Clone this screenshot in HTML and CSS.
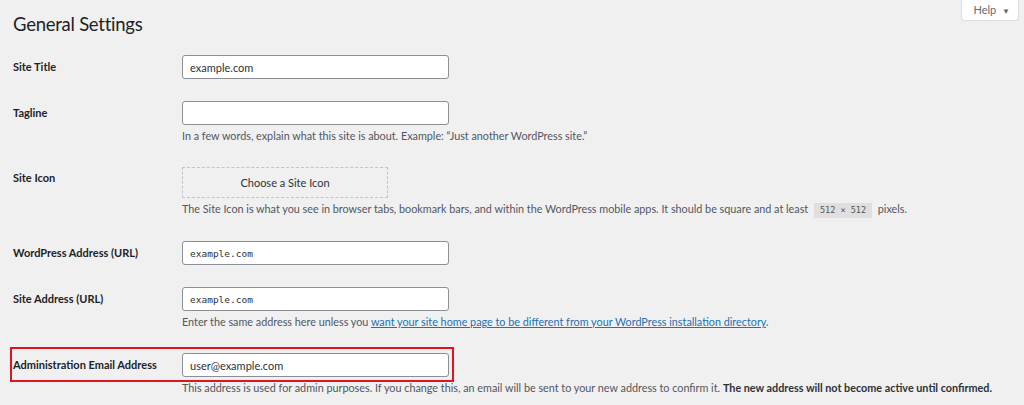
FILE: index.html
```html
<!DOCTYPE html>
<html lang="en">
<head>
  <meta charset="UTF-8" />
  <meta name="viewport" content="width=device-width, initial-scale=1.0"/>
  <title>General Settings</title>
  <link rel="stylesheet" href="styles.css">
</head>
<body>
  <div class="top-bar">
    <h1>General Settings</h1>
    <button class="help-btn">Help <span class="caret">&#9660;</span></button>
  </div>

  <div class="form">
    <div class="row row-first">
      <label class="label" for="blogname">Site Title</label>
      <div class="field">
        <input class="text-input" id="blogname" type="text" value="example.com" />
      </div>
    </div>

    <div class="row">
      <label class="label" for="tagline">Tagline</label>
      <div class="field">
        <input class="text-input" id="tagline" type="text" value="" />
        <p class="description">In a few words, explain what this site is about. Example: “Just another WordPress site.”</p>
      </div>
    </div>

    <div class="row">
      <label class="label label-icon">Site Icon</label>
      <div class="field">
        <button class="icon-btn">Choose a Site Icon</button>
        <p class="description">The Site Icon is what you see in browser tabs, bookmark bars, and within the WordPress mobile apps. It should be square and at least <code>512 × 512</code> pixels.</p>
      </div>
    </div>

    <div class="row">
      <label class="label" for="siteurl">WordPress Address (URL)</label>
      <div class="field">
        <input class="text-input code-input" id="siteurl" type="text" value="example.com" />
      </div>
    </div>

    <div class="row">
      <label class="label" for="home">Site Address (URL)</label>
      <div class="field">
        <input class="text-input code-input" id="home" type="text" value="example.com" />
        <p class="description">Enter the same address here unless you <a href="#">want your site home page to be different from your WordPress installation directory</a>.</p>
      </div>
    </div>

    <div class="row row-highlight">
      <span class="highlight"></span>
      <label class="label" for="admin_email">Administration Email Address</label>
      <div class="field">
        <input class="text-input" id="admin_email" type="text" value="user@example.com" />
        <p class="description">This address is used for admin purposes. If you change this, an email will be sent to your new address to confirm it. <strong>The new address will not become active until confirmed.</strong></p>
      </div>
    </div>
  </div>
</body>
</html>
```

FILE: styles.css
```css
body {
  margin: 0;
  background: #f0f0f1;
  color: #1d2327;
  font-family: Lato, "Open Sans", Arial, sans-serif;
  font-size: 12px;
}
.top-bar {
  display: flex;
  justify-content: space-between;
  align-items: flex-start;
  padding: 0 5px 0 13px;
}
h1 {
  margin: 12px 0 0;
  font-size: 18.5px;
  font-weight: 400;
  line-height: 24px;
  letter-spacing: -0.25px;
}
.help-btn {
  background: #fff;
  border: 1px solid #dcdcde;
  border-top: none;
  border-radius: 0 0 4px 4px;
  color: #646970;
  font-family: inherit;
  font-size: 11px;
  padding: 2px 8px 3px 11px;
  height: 21px;
}
.caret {
  font-size: 8px;
  margin-left: 3px;
}
.form {
  padding: 0 13px;
}
.row {
  display: flex;
  align-items: flex-start;
  margin-top: 22px;
  position: relative;
}
.row-first {
  margin-top: 19px;
}
.label {
  width: 169px;
  flex-shrink: 0;
  font-weight: 700;
  font-size: 11px;
  line-height: 24px;
  white-space: nowrap;
}
.label-icon {
  line-height: 22px;
}
.field {
  flex: 1;
}
.text-input {
  display: block;
  box-sizing: border-box;
  width: 267px;
  height: 24px;
  margin: 0;
  padding: 0 7px;
  background: #fff;
  border: 1px solid #8c8f94;
  border-radius: 3px;
  color: #2c3338;
  font-family: inherit;
  font-size: 11px;
}
.code-input {
  font-family: "DejaVu Sans Mono", "Liberation Mono", monospace;
  font-size: 9.5px;
}
.icon-btn {
  display: block;
  box-sizing: border-box;
  width: 206px;
  height: 31px;
  background: #f0f0f1;
  border: 1px dashed #c3c4c7;
  color: #2c3338;
  font-family: inherit;
  font-size: 11px;
}
.description {
  margin: 2px 0 0;
  color: #50575e;
  font-size: 10.8px;
  line-height: 18px;
}
.description a {
  color: #2271b1;
}
.description strong {
  color: #2c3338;
  font-weight: 700;
}
code {
  font-family: "DejaVu Sans Mono", "Liberation Mono", monospace;
  font-size: 8.5px;
  background: rgba(0, 0, 0, 0.07);
  padding: 2px 6px 3px;
  margin: 0 3px;
}
.highlight {
  position: absolute;
  left: -3px;
  top: -6px;
  width: 444px;
  height: 35px;
  box-sizing: border-box;
  border: 2px solid #e0141e;
  pointer-events: none;
}
```
